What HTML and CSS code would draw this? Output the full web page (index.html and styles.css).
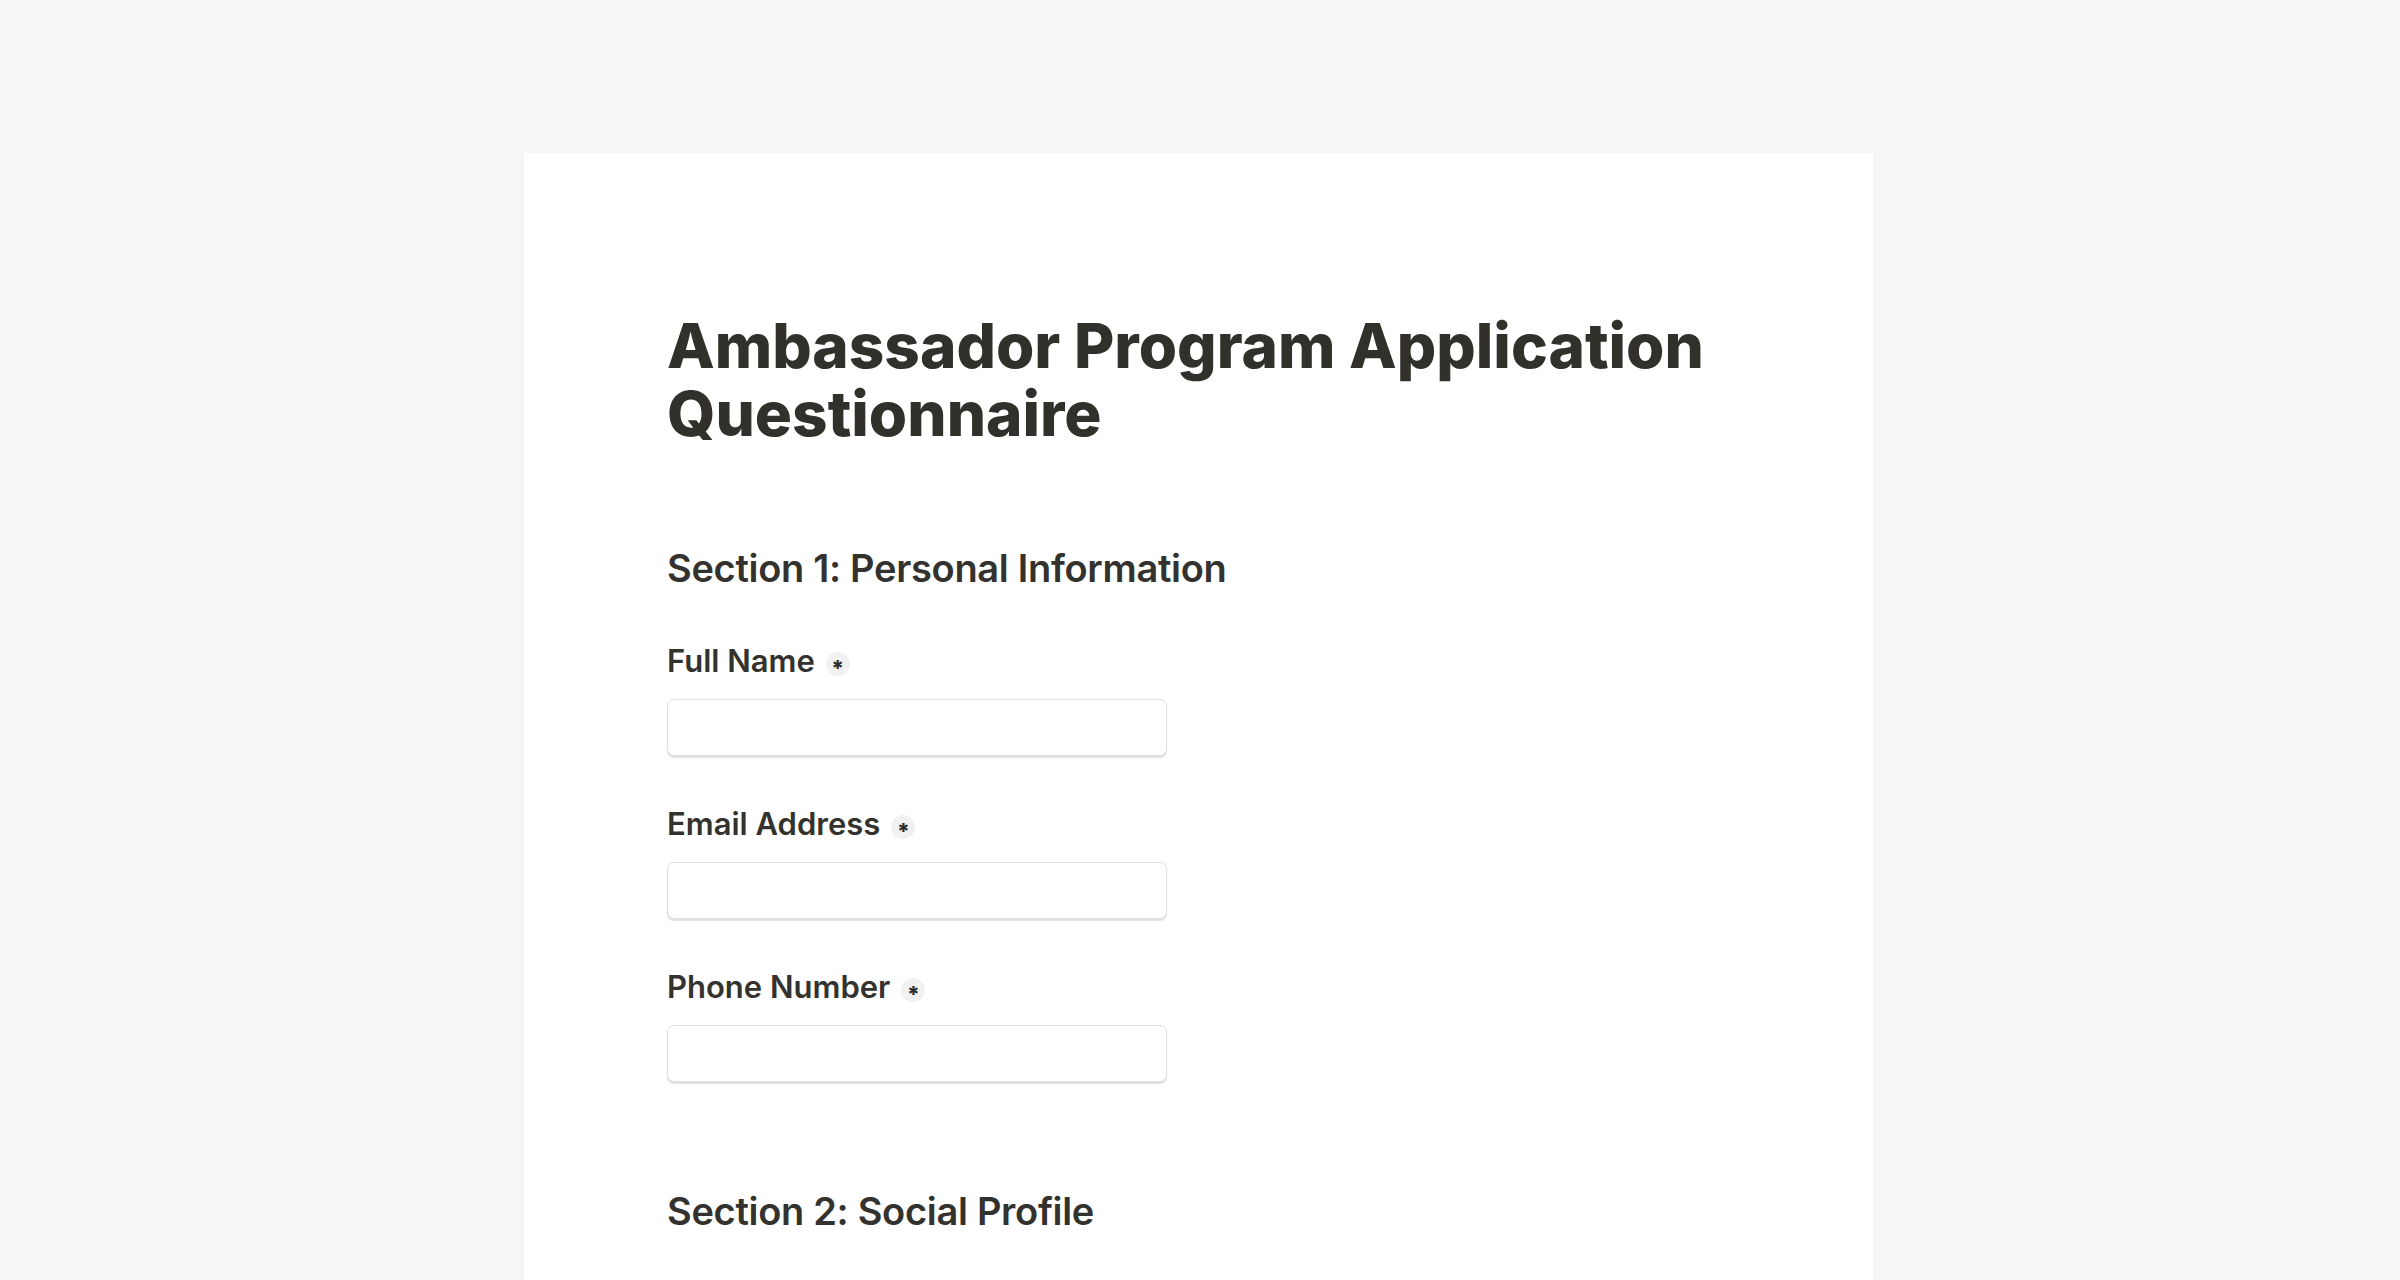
FILE: index.html
```html
<!DOCTYPE html>
<html lang="en">
<head>
<meta charset="utf-8">
<title>Ambassador Program Application Questionnaire</title>
<link rel="stylesheet" href="styles.css">
</head>
<body>
<main class="card">
  <h1 class="title">Ambassador Program Application Questionnaire</h1>
  <section class="section">
    <h2 class="section-title">Section 1: Personal Information</h2>
    <div class="field">
      <label class="label">Full Name <span class="req"><span class="star">*</span></span></label>
      <input class="input" type="text">
    </div>
    <div class="field">
      <label class="label">Email Address <span class="req"><span class="star">*</span></span></label>
      <input class="input" type="text">
    </div>
    <div class="field">
      <label class="label">Phone Number <span class="req"><span class="star">*</span></span></label>
      <input class="input" type="text">
    </div>
  </section>
  <section class="section">
    <h2 class="section-title">Section 2: Social Profile</h2>
  </section>
</main>
</body>
</html>
```

FILE: styles.css
```css
html, body {
  margin: 0;
  padding: 0;
  background: #f6f6f6;
  height: 100%;
  overflow: hidden;
}
body {
  font-family: Inter, "Noto Sans", sans-serif;
  color: #33322e;
}
.card {
  width: 1349px;
  box-sizing: border-box;
  margin: 153px 0 0 calc(50% - 676px);
  background: #ffffff;
  padding: 159px 142px 200px 143px;
  min-height: 1400px;
}
.title {
  margin: 0;
  font-size: 62px;
  line-height: 68px;
  font-weight: 800;
  letter-spacing: 0;
  color: #31302b;
  max-width: 1080px;
}
.section {
  margin-top: 97px;
  display: flex;
  flex-direction: column;
}
.section + .section {
  margin-top: 106px;
}
.section-title {
  margin: 0;
  font-size: 38px;
  line-height: 47px;
  font-weight: 600;
  letter-spacing: -0.3px;
  color: #33322e;
}
.field {
  display: flex;
  flex-direction: column;
  margin-top: 51px;
}
.field + .field {
  margin-top: 50px;
}
.label {
  display: flex;
  align-items: center;
  gap: 11px;
  font-size: 31px;
  line-height: 36px;
  font-weight: 600;
  color: #33322e;
}
.req {
  display: inline-flex;
  align-items: center;
  justify-content: center;
  width: 24px;
  height: 24px;
  border-radius: 50%;
  background: #f1f1f1;
  margin-top: 6px;
}
.star {
  display: block;
  font-size: 22px;
  line-height: 22px;
  height: 22px;
  font-weight: 800;
  color: #2a2a2a;
  transform: translateY(4px);
}
.input {
  margin-top: 20px;
  width: 500px;
  height: 57px;
  box-sizing: border-box;
  border: 1.5px solid #e0e0e0;
  border-radius: 7px;
  background: #fff;
  box-shadow: 0 1.5px 1px rgba(0, 0, 0, 0.12);
  outline: none;
  padding: 0 14px;
  font: inherit;
}
```
